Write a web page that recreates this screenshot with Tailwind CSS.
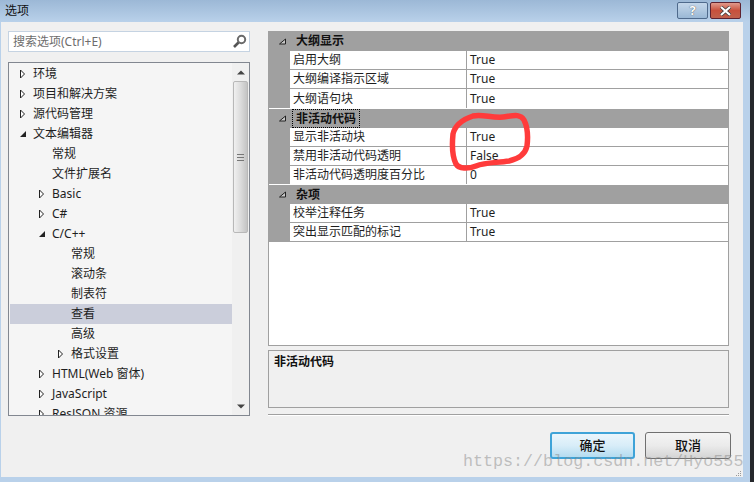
<!DOCTYPE html>
<html lang="zh-CN">
<head>
    <meta charset="UTF-8">
    <title>选项</title>
    <script src="https://cdn.jsdelivr.net/npm/@tailwindcss/browser@4"></script>
</head>
<body class="w-[754px] h-[482px] overflow-hidden bg-[#26282c] font-['Noto_Sans','Noto_Sans_CJK_SC',sans-serif] text-xs text-[#1e1e1e]">
    <div class="relative w-[750px] h-[482px] bg-[#b9d1ea] flex flex-col">
        <!-- title bar -->
        <div class="h-[22px] flex items-center justify-between pl-[5px] pr-[9px] bg-gradient-to-b from-[#9cb8d6] to-[#b9d1ea]">
            <span class="text-xs text-[#111]">选项</span>
            <div class="flex gap-[2px] self-start mt-[2px]">
                <div class="w-[31px] h-[17px] rounded-[2px] border border-[#4f6a8c] bg-gradient-to-b from-[#c3d6ea] via-[#b0c8e0] to-[#9ab8d6] flex items-center justify-center text-[13px] leading-none font-bold text-white [text-shadow:0_0_1px_#222]">?</div>
                <div class="w-[31px] h-[17px] rounded-[2px] border border-[#5e2230] bg-gradient-to-b from-[#e09a8c] via-[#c8503c] to-[#c0604c] flex items-center justify-center">
                    <svg width="13" height="10" viewBox="0 0 13 10"><path d="M2 1l9 8M11 1l-9 8" stroke="#3a3a3a" stroke-width="3.6"/><path d="M2 1l9 8M11 1l-9 8" stroke="#fff" stroke-width="2.2"/></svg>
                </div>
            </div>
        </div>

        <!-- client area -->
        <div class="relative ml-px w-[742px] h-[455px] bg-[#f0f0f0] flex pl-[7px] pt-[9px] gap-[18px]">
            <!-- left column -->
            <div class="w-[242px] flex flex-col">
                <div class="h-[21px] bg-white border border-[#c5d3e2] flex items-center justify-between pl-[4px] pr-[2px] text-[#6d6d6d]">
                    <span>搜索选项(Ctrl+E)</span>
                    <svg width="15" height="15" viewBox="0 0 15 15"><circle cx="9.5" cy="5.5" r="3.7" fill="none" stroke="#6a6a6a" stroke-width="2"/><path d="M6.5 8.5L2 13" stroke="#555" stroke-width="2.6"/></svg>
                </div>
                <div class="mt-[10px] h-[354px] bg-[#f5f5f5] border border-[#828790] flex overflow-hidden">
                    <div class="w-[223px] pt-px pl-px flex flex-col">
                        <div class="h-5 shrink-0 flex items-center pl-[9px]"><svg class="mr-[5px]" width="7" height="10" viewBox="0 0 7 10"><path d="M1.5 1v8l4-4z" fill="#fff" stroke="#222"/></svg><span class="ml-[2px]">环境</span></div>
                        <div class="h-5 shrink-0 flex items-center pl-[9px]"><svg class="mr-[5px]" width="7" height="10" viewBox="0 0 7 10"><path d="M1.5 1v8l4-4z" fill="#fff" stroke="#222"/></svg><span class="ml-[2px]">项目和解决方案</span></div>
                        <div class="h-5 shrink-0 flex items-center pl-[9px]"><svg class="mr-[5px]" width="7" height="10" viewBox="0 0 7 10"><path d="M1.5 1v8l4-4z" fill="#fff" stroke="#222"/></svg><span class="ml-[2px]">源代码管理</span></div>
                        <div class="h-5 shrink-0 flex items-center pl-[9px]"><svg class="mr-[5px]" width="7" height="10" viewBox="0 0 7 10"><path d="M1 8h6V2z" fill="#222"/></svg><span class="ml-[2px]">文本编辑器</span></div>
                        <div class="h-5 shrink-0 flex items-center pl-[42px]">常规</div>
                        <div class="h-5 shrink-0 flex items-center pl-[42px]">文件扩展名</div>
                        <div class="h-5 shrink-0 flex items-center pl-[28px]"><svg class="mr-[5px]" width="7" height="10" viewBox="0 0 7 10"><path d="M1.5 1v8l4-4z" fill="#fff" stroke="#222"/></svg><span class="ml-[2px]">Basic</span></div>
                        <div class="h-5 shrink-0 flex items-center pl-[28px]"><svg class="mr-[5px]" width="7" height="10" viewBox="0 0 7 10"><path d="M1.5 1v8l4-4z" fill="#fff" stroke="#222"/></svg><span class="ml-[2px]">C#</span></div>
                        <div class="h-5 shrink-0 flex items-center pl-[28px]"><svg class="mr-[5px]" width="7" height="10" viewBox="0 0 7 10"><path d="M1 8h6V2z" fill="#222"/></svg><span class="ml-[2px]">C/C++</span></div>
                        <div class="h-5 shrink-0 flex items-center pl-[61px]">常规</div>
                        <div class="h-5 shrink-0 flex items-center pl-[61px]">滚动条</div>
                        <div class="h-5 shrink-0 flex items-center pl-[61px]">制表符</div>
                        <div class="h-5 shrink-0 flex items-center pl-[61px] bg-[#cbcedb]">查看</div>
                        <div class="h-5 shrink-0 flex items-center pl-[61px]">高级</div>
                        <div class="h-5 shrink-0 flex items-center pl-[47px]"><svg class="mr-[5px]" width="7" height="10" viewBox="0 0 7 10"><path d="M1.5 1v8l4-4z" fill="#fff" stroke="#222"/></svg><span class="ml-[2px]">格式设置</span></div>
                        <div class="h-5 shrink-0 flex items-center pl-[28px]"><svg class="mr-[5px]" width="7" height="10" viewBox="0 0 7 10"><path d="M1.5 1v8l4-4z" fill="#fff" stroke="#222"/></svg><span class="ml-[2px]">HTML(Web 窗体)</span></div>
                        <div class="h-5 shrink-0 flex items-center pl-[28px]"><svg class="mr-[5px]" width="7" height="10" viewBox="0 0 7 10"><path d="M1.5 1v8l4-4z" fill="#fff" stroke="#222"/></svg><span class="ml-[2px]">JavaScript</span></div>
                        <div class="h-5 shrink-0 flex items-center pl-[28px]"><svg class="mr-[5px]" width="7" height="10" viewBox="0 0 7 10"><path d="M1.5 1v8l4-4z" fill="#fff" stroke="#222"/></svg><span class="ml-[2px]">ResJSON 资源</span></div>
                    </div>
                    <!-- scrollbar -->
                    <div class="w-[17px] flex flex-col bg-[#f0f0f0]">
                        <div class="h-[18px] flex items-center justify-center">
                            <svg width="8" height="5" viewBox="0 0 8 5"><path d="M0 4.5h8L4 .5z" fill="#444"/></svg>
                        </div>
                        <div class="h-[152px] mx-px rounded-[2px] border border-[#b8b8b8] bg-gradient-to-r from-[#f0f0f0] via-[#dcdcdc] to-[#c4c4c4] flex items-center justify-center">
                            <div class="w-[7px] h-[7px] border-y border-[#777] flex items-center"><div class="w-full h-px bg-[#777]"></div></div>
                        </div>
                        <div class="flex-1"></div>
                        <div class="h-[18px] flex items-center justify-center">
                            <svg width="8" height="5" viewBox="0 0 8 5"><path d="M0 .5h8L4 4.5z" fill="#444"/></svg>
                        </div>
                    </div>
                </div>
            </div>

            <!-- right column -->
            <div class="w-[463px] flex flex-col">
                <div class="w-[461px] h-[315px] bg-white border-l border-b border-r border-[#a0a0a0]">
                    <div class="h-5 bg-[#a0a0a0] flex items-center font-bold text-[#111]"><svg class="ml-[10px] mr-[9px]" width="7" height="7" viewBox="0 0 7 7"><path d="M.5 6h6V1z" fill="#c8c8c8" stroke="#222"/></svg><span class="ml-[1px]">大纲显示</span></div>
                    <div class="h-[19px] flex pl-[21px] bg-[#a0a0a0]"><div class="w-[177px] bg-white border-b border-[#a0a0a0] pl-[3px] flex items-center border-r">启用大纲</div><div class="flex-1 bg-white border-b border-[#a0a0a0] pl-[3px] flex items-center">True</div></div>
                    <div class="h-[19px] flex pl-[21px] bg-[#a0a0a0]"><div class="w-[177px] bg-white border-b border-[#a0a0a0] pl-[3px] flex items-center border-r">大纲编译指示区域</div><div class="flex-1 bg-white border-b border-[#a0a0a0] pl-[3px] flex items-center">True</div></div>
                    <div class="h-[19px] flex pl-[21px] bg-[#a0a0a0]"><div class="w-[177px] bg-white pl-[3px] flex items-center border-r border-[#a0a0a0]">大纲语句块</div><div class="flex-1 bg-white pl-[3px] flex items-center">True</div></div>

                    <div class="h-5 bg-[#a0a0a0] flex items-center font-bold text-[#111] border-t border-white"><svg class="ml-[10px] mr-[6px]" width="7" height="7" viewBox="0 0 7 7"><path d="M.5 6h6V1z" fill="#c8c8c8" stroke="#222"/></svg><span class="px-[3px] border border-dotted border-black leading-[17px] h-[19px]">非活动代码</span></div>
                    <div class="h-[19px] flex pl-[21px] bg-[#a0a0a0]"><div class="w-[177px] bg-white border-b border-[#a0a0a0] pl-[3px] flex items-center border-r">显示非活动块</div><div class="flex-1 bg-white border-b border-[#a0a0a0] pl-[3px] flex items-center">True</div></div>
                    <div class="h-[19px] flex pl-[21px] bg-[#a0a0a0]"><div class="w-[177px] bg-white border-b border-[#a0a0a0] pl-[3px] flex items-center border-r">禁用非活动代码透明</div><div class="flex-1 bg-white border-b border-[#a0a0a0] pl-[3px] flex items-center">False</div></div>
                    <div class="h-[18px] flex pl-[21px] bg-[#a0a0a0]"><div class="w-[177px] bg-white pl-[3px] flex items-center border-r border-[#a0a0a0]">非活动代码透明度百分比</div><div class="flex-1 bg-white pl-[3px] flex items-center">0</div></div>

                    <div class="h-5 bg-[#a0a0a0] flex items-center font-bold text-[#111] border-t border-white"><svg class="ml-[10px] mr-[9px]" width="7" height="7" viewBox="0 0 7 7"><path d="M.5 6h6V1z" fill="#c8c8c8" stroke="#222"/></svg><span class="ml-[1px]">杂项</span></div>
                    <div class="h-[19px] flex pl-[21px] bg-[#a0a0a0]"><div class="w-[177px] bg-white border-b border-[#a0a0a0] pl-[3px] flex items-center border-r">校举注释任务</div><div class="flex-1 bg-white border-b border-[#a0a0a0] pl-[3px] flex items-center">True</div></div>
                    <div class="h-[19px] flex pl-[21px] bg-[#a0a0a0]"><div class="w-[177px] bg-white border-b border-[#a0a0a0] pl-[3px] flex items-center border-r">突出显示匹配的标记</div><div class="flex-1 bg-white border-b border-[#a0a0a0] pl-[3px] flex items-center">True</div></div>
                </div>

                <div class="mt-1 w-[461px] h-[58px] border border-[#a0a0a0] pl-[5px] pt-[3px] font-bold text-[#111]">非活动代码</div>
                <div class="mt-[6px] w-[461px] h-[2px] bg-[#a0a0a0] border-b border-white"></div>

                <div class="mt-[16px] flex justify-end gap-[10px]">
                    <button class="w-[85px] h-[27px] rounded-[3px] border-2 border-[#3ea3d8] bg-gradient-to-b from-[#eaf5fc] via-[#d8edf8] to-[#b4dcf0] text-[#111] text-[13px] font-medium">确定</button>
                    <button class="w-[86px] h-[27px] rounded-[3px] border border-[#707070] bg-gradient-to-b from-[#f4f4f4] via-[#ebebeb] to-[#d4d4d4] text-[#111] text-[13px] font-medium">取消</button>
                </div>
            </div>

            <!-- resize grip -->
            <div class="absolute right-[2px] bottom-[1px] grid grid-cols-3 gap-px">
                <span class="col-start-3 w-px h-px bg-[#999]"></span>
                <span class="col-start-2 w-px h-px bg-[#999]"></span><span class="w-px h-px bg-[#999]"></span>
                <span class="w-px h-px bg-[#999]"></span><span class="w-px h-px bg-[#999]"></span><span class="w-px h-px bg-[#999]"></span>
            </div>
        </div>

        <!-- red hand drawn circle -->
        <svg class="absolute left-0 top-0 pointer-events-none" width="750" height="482" viewBox="0 0 750 482">
            <path d="M473 116C482 114 492 118 503 117C512 116 520 113 524 120C528 128 528 138 527 146C525 155 518 159 509 161C497 163 486 162 476 166C468 169 459 169 456 164C452 156 452 144 453 134C455 125 464 119 473 116Z" fill="none" stroke="#ff3b3b" stroke-width="5.5" stroke-linecap="round"/>
        </svg>

        <!-- watermark -->
        <div class="absolute left-[463px] top-[451px] font-['Liberation_Mono',monospace] text-[16.7px] leading-[22px] text-[#8a8a8a]/50 pointer-events-none">https://blog.csdn.net/Hyo555</div>
    </div>
</body>
</html>
